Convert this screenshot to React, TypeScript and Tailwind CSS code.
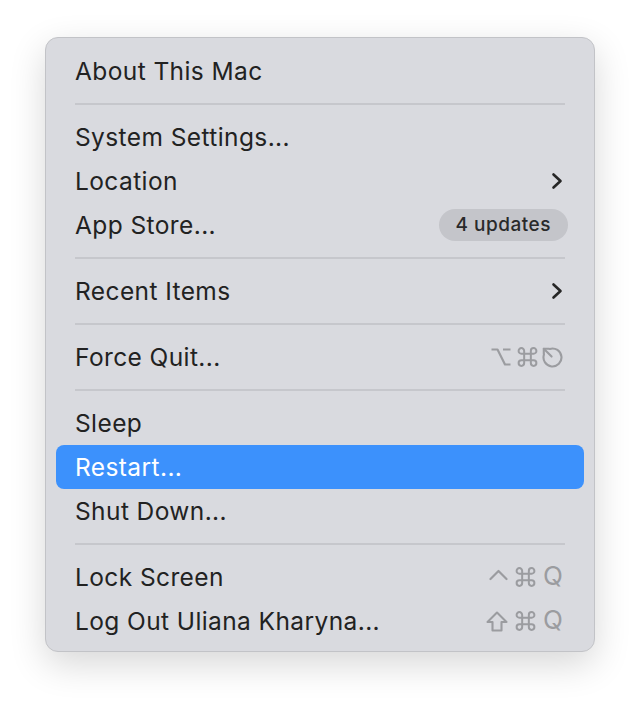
type Item = {
  label: string;
  submenu?: boolean;
  badge?: string;
  keys?: React.ReactNode;
  active?: boolean;
};

const Chevron = () => (
  <svg width="12" height="18" viewBox="0 0 12 18" fill="none" stroke="currentColor" strokeWidth="2.6" strokeLinecap="round" strokeLinejoin="round">
    <path d="M2.5 2.5L9.5 9l-7 6.5" />
  </svg>
);

const Cmd = () => (
  <svg width="21" height="20" viewBox="1 1 18 18" fill="none" stroke="currentColor" strokeWidth="1.8">
    <path d="M7 7V4.5A2.5 2.5 0 1 0 4.5 7H15.5A2.5 2.5 0 1 0 13 4.5V15.5A2.5 2.5 0 1 0 15.5 13H4.5A2.5 2.5 0 1 0 7 15.5Z" />
  </svg>
);

const OptionKey = () => (
  <svg width="20" height="20" viewBox="0 0 20 20" fill="none" stroke="currentColor" strokeWidth="2.2" strokeLinejoin="round">
    <path d="M0.5 2.5h6l7.5 15h5.5M12 2.5h7.5" />
  </svg>
);

const EscapeKey = () => (
  <svg width="21" height="21" viewBox="0 0 21 21" fill="none" stroke="currentColor" strokeWidth="2.1" strokeLinecap="round" strokeLinejoin="round">
    <path d="M7.8 1.9A9 9 0 1 1 1.9 7.8" />
    <path d="M1.8 1.8l7.8 7.8" />
    <path d="M1.8 7V1.8H7" />
  </svg>
);

const ControlKey = () => (
  <svg width="19" height="20" viewBox="0 0 19 20" fill="none" stroke="currentColor" strokeWidth="2.2" strokeLinecap="round" strokeLinejoin="round">
    <path d="M1.5 12L9.5 4l8 8" />
  </svg>
);

const ShiftKey = () => (
  <svg width="22" height="21" viewBox="0 0 22 21" fill="none" stroke="currentColor" strokeWidth="2.1" strokeLinejoin="round">
    <path d="M11 1.5L1.5 11h5v8.5h9V11h5z" />
  </svg>
);

const Q = () => <span className="text-[26px] leading-none">Q</span>;

const groups: Item[][] = [
  [{ label: "About This Mac" }],
  [
    { label: "System Settings..." },
    { label: "Location", submenu: true },
    { label: "App Store...", badge: "4 updates" },
  ],
  [{ label: "Recent Items", submenu: true }],
  [
    {
      label: "Force Quit...",
      keys: (
        <>
          <OptionKey />
          <span className="ml-[6px]"><Cmd /></span>
          <span className="ml-[4px]"><EscapeKey /></span>
        </>
      ),
    },
  ],
  [{ label: "Sleep" }, { label: "Restart...", active: true }, { label: "Shut Down..." }],
  [
    {
      label: "Lock Screen",
      keys: (
        <>
          <ControlKey />
          <span className="ml-[7px]"><Cmd /></span>
          <span className="ml-[7px]"><Q /></span>
        </>
      ),
    },
    {
      label: "Log Out Uliana Kharyna...",
      keys: (
        <>
          <ShiftKey />
          <span className="ml-[7px]"><Cmd /></span>
          <span className="ml-[7px]"><Q /></span>
        </>
      ),
    },
  ],
];

const Row = ({ item }: { item: Item }) => (
  <div
    className={`flex h-[44px] items-center justify-between rounded-[8px] pl-[19px] ${
      item.badge ? "pr-[16px]" : "pr-[21px]"
    } ${item.active ? "bg-[#3c91fc] text-white" : "text-[#222222]"}`}
  >
    <span className="text-[24.5px] leading-none tracking-[0.4px]">{item.label}</span>
    {item.submenu && (
      <span className="flex items-center text-[#262626]">
        <Chevron />
      </span>
    )}
    {item.badge && (
      <span className="flex h-[32px] items-center rounded-full bg-[#c4c5ca] px-[17px] text-[19px] font-medium tracking-[0.5px] text-[#2a2a2a]">
        {item.badge}
      </span>
    )}
    {item.keys && <span className="flex items-center text-[#9b9ca0]">{item.keys}</span>}
  </div>
);

export default function App() {
  return (
    <div className="min-h-[706px] bg-white pl-[45px] pt-[37px] font-['Inter','DejaVu_Sans',sans-serif]">
      <div className="flex h-[615px] w-[550px] flex-col rounded-[13px] border border-[#c2c3c7] bg-[#d9dadf] px-[10px] pt-[11px] pb-[8px] shadow-[0_12px_36px_rgba(0,0,0,0.16)]">
        {groups.map((g, gi) => (
          <div key={gi} className="flex flex-col">
            {gi > 0 && (
              <div className="flex h-[22px] items-center px-[19px]">
                <div className="h-[2px] w-full bg-[#c6c7cc]" />
              </div>
            )}
            {g.map((item) => (
              <Row key={item.label} item={item} />
            ))}
          </div>
        ))}
      </div>
    </div>
  );
}
